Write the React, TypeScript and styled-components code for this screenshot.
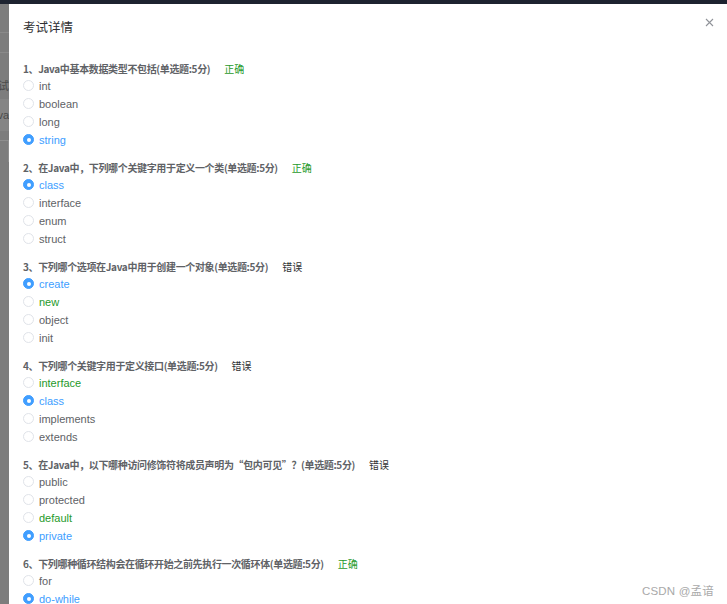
import React from "react";
import styled, { createGlobalStyle } from "styled-components";

const GlobalStyle = createGlobalStyle`
  html, body {
    margin: 0;
    padding: 0;
    height: 100%;
    overflow: hidden;
    background: #7b7b7b;
  }
  * { box-sizing: border-box; }
`;

const Screen = styled.div`
  display: flex;
  flex-direction: column;
  width: 727px;
  height: 604px;
  overflow: hidden;
  font-family: "Liberation Sans", "Noto Sans CJK SC", sans-serif;
`;

const TopBar = styled.div`
  height: 4px;
  flex: none;
  background: #1d2330;
`;

const Body = styled.div`
  flex: 1;
  display: flex;
  min-height: 0;
`;

const SideStrip = styled.div`
  width: 9px;
  flex: none;
  display: flex;
  flex-direction: column;
  background: #7d7d7d;
`;

const StripRow = styled.div<{ $h: number; $bg?: string; $line?: boolean; $box?: boolean }>`
  height: ${({ $h }) => $h}px;
  flex: none;
  background: ${({ $bg }) => $bg || "transparent"};
  border-bottom: ${({ $line }) => ($line ? "1px solid #8a8a8a" : "none")};
  border-top: ${({ $box }) => ($box ? "1px solid #8e8e8e" : "none")};
  border-right: ${({ $box }) => ($box ? "1px solid #8e8e8e" : "none")};
  color: #4a4a4a;
  font-size: 11px;
  line-height: ${({ $h }) => $h}px;
  white-space: nowrap;
  overflow: hidden;
  direction: rtl;
`;

const Dialog = styled.div`
  flex: 1;
  position: relative;
  background: #ffffff;
  overflow: hidden;
  padding: 0 14px;
`;

const Header = styled.div`
  display: flex;
  justify-content: space-between;
  align-items: center;
  padding-top: 14px;
  height: 32px;
`;

const Title = styled.span`
  font-size: 12.5px;
  line-height: 18px;
  color: #303133;
  font-family: "Noto Sans CJK SC", sans-serif;
`;

const Close = styled.span`
  width: 10px;
  height: 10px;
  display: flex;
  align-items: center;
  justify-content: center;
  margin-top: -9px;
  margin-right: -1px;
`;

const Questions = styled.div`
  padding-top: 23.5px;
`;

const Question = styled.div`
  margin-bottom: 10px;
`;

const QTitle = styled.div`
  display: flex;
  align-items: center;
  height: 17px;
  font-size: 10px;
  color: #606266;
  font-family: "Noto Sans CJK SC", sans-serif;
`;

const QText = styled.span`
  font-weight: 700;
  letter-spacing: -0.35px;
`;

const Status = styled.span<{ $ok: boolean }>`
  margin-left: 14px;
  color: ${({ $ok }) => ($ok ? "#1f9a2b" : "#303133")};
`;

const Option = styled.div`
  display: flex;
  align-items: center;
  height: 18px;
  gap: 5px;
`;

const Radio = styled.span<{ $checked: boolean }>`
  width: 11px;
  height: 11px;
  border-radius: 50%;
  flex: none;
  display: flex;
  align-items: center;
  justify-content: center;
  border: 1px solid ${({ $checked }) => ($checked ? "#409eff" : "#e0e3e9")};
  background: ${({ $checked }) => ($checked ? "#409eff" : "#ffffff")};

  &::after {
    content: "";
    width: 4px;
    height: 4px;
    border-radius: 50%;
    background: #ffffff;
    display: ${({ $checked }) => ($checked ? "block" : "none")};
  }
`;

const Label = styled.span<{ $tone: "plain" | "chosen" | "answer" }>`
  font-size: 11px;
  color: ${({ $tone }) =>
    $tone === "chosen" ? "#409eff" : $tone === "answer" ? "#1f9a2b" : "#606266"};
`;

const Watermark = styled.div`
  position: absolute;
  right: 13px;
  bottom: 6px;
  font-size: 11.5px;
  color: #a9a9a9;
  letter-spacing: 0.2px;
`;

type Q = {
  text: string;
  ok: boolean;
  options: string[];
  chosen: number;
  answer: number;
};

const questions: Q[] = [
  { text: "1、Java中基本数据类型不包括(单选题:5分)", ok: true, options: ["int", "boolean", "long", "string"], chosen: 3, answer: 3 },
  { text: "2、在Java中，下列哪个关键字用于定义一个类(单选题:5分)", ok: true, options: ["class", "interface", "enum", "struct"], chosen: 0, answer: 0 },
  { text: "3、下列哪个选项在Java中用于创建一个对象(单选题:5分)", ok: false, options: ["create", "new", "object", "init"], chosen: 0, answer: 1 },
  { text: "4、下列哪个关键字用于定义接口(单选题:5分)", ok: false, options: ["interface", "class", "implements", "extends"], chosen: 1, answer: 0 },
  { text: "5、在Java中，以下哪种访问修饰符将成员声明为“包内可见”？(单选题:5分)", ok: false, options: ["public", "protected", "default", "private"], chosen: 3, answer: 2 },
  { text: "6、下列哪种循环结构会在循环开始之前先执行一次循环体(单选题:5分)", ok: true, options: ["for", "do-while", "while", "foreach"], chosen: 1, answer: 1 },
];

export default function App() {
  return (
    <Screen>
      <GlobalStyle />
      <TopBar />
      <Body>
        <SideStrip>
          <StripRow $h={29} $line />
          <StripRow $h={20} $line />
          <StripRow $h={20} />
          <StripRow $h={26}>试</StripRow>
          <StripRow $h={32} $bg="#858585">va</StripRow>
          <StripRow $h={9} />
          <StripRow $h={22} $box />
        </SideStrip>
        <Dialog>
          <Header>
            <Title>考试详情</Title>
            <Close>
              <svg width="9" height="9" viewBox="0 0 9 9">
                <path d="M1 1L8 8M8 1L1 8" stroke="#909399" strokeWidth="1.1" fill="none" />
              </svg>
            </Close>
          </Header>
          <Questions>
            {questions.map((q, i) => (
              <Question key={i}>
                <QTitle>
                  <QText>{q.text}</QText>
                  <Status $ok={q.ok}>{q.ok ? "正确" : "错误"}</Status>
                </QTitle>
                {q.options.map((o, j) => (
                  <Option key={j}>
                    <Radio $checked={q.chosen === j} />
                    <Label $tone={q.chosen === j ? "chosen" : q.answer === j ? "answer" : "plain"}>{o}</Label>
                  </Option>
                ))}
              </Question>
            ))}
          </Questions>
          <Watermark>CSDN @孟谙</Watermark>
        </Dialog>
      </Body>
    </Screen>
  );
}
